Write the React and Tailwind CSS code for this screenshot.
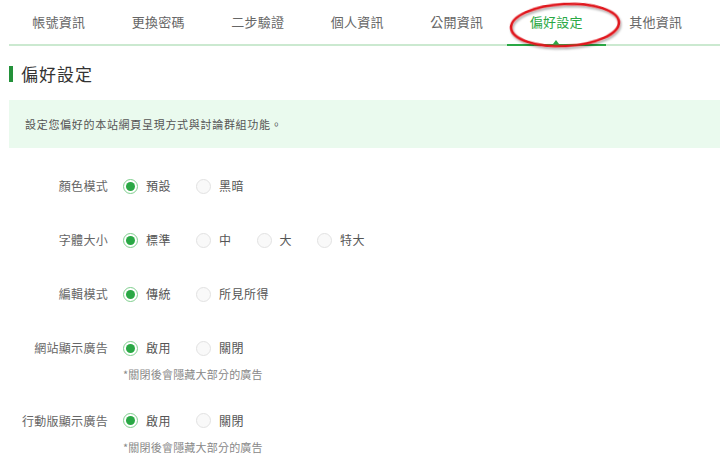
import React, { useState } from 'react';

const tabs = ['帳號資訊', '更換密碼', '二步驗證', '個人資訊', '公開資訊', '偏好設定', '其他資訊'];

const Radio = ({ checked, label, onClick }) => (
    <button type="button" onClick={onClick} className="flex items-center mr-[25px]">
        <span
            className={`w-[15px] h-[15px] rounded-full border flex items-center justify-center ${
                checked ? 'border-[#7fcf8e] bg-white' : 'border-[#e2e2e2] bg-[#f9f9f9]'
            }`}
        >
            {checked && <span className="w-[9px] h-[9px] rounded-full bg-[#2aa845]" />}
        </span>
        <span className="ml-[8px] text-[12px] text-[#555] tracking-[0.5px]">{label}</span>
    </button>
);

const Row = ({ label, options, note }) => {
    const [value, setValue] = useState(0);
    return (
        <div className="flex">
            <div className="w-[100px] text-right text-[12px] text-[#666] tracking-[0.3px] leading-[18px]">{label}</div>
            <div className="ml-[15px]">
                <div className="flex items-center h-[18px]">
                    {options.map((o, i) => (
                        <Radio key={o} label={o} checked={value === i} onClick={() => setValue(i)} />
                    ))}
                </div>
                {note && <div className="mt-[9px] mb-[-7px] text-[11px] text-[#888] tracking-[0.2px]">{note}</div>}
            </div>
        </div>
    );
};

const App = () => {
    return (
        <div className="w-[720px] h-[465px] overflow-hidden bg-white" style={{ fontFamily: '"Noto Sans CJK TC", "Liberation Sans", sans-serif' }}>
            {/* Tabs */}
            <div className="relative ml-[9px] flex h-[46px] border-b-[2px] border-[#cbe9d0]">
                {tabs.map((t) => {
                    const active = t === '偏好設定';
                    return (
                        <div
                            key={t}
                            className={`relative w-[99.5px] flex items-center justify-center text-[13px] tracking-[0.3px] ${
                                active ? 'text-[#2aa845]' : 'text-[#666]'
                            }`}
                        >
                            {t}
                            {active && (
                                <>
                                    <span className="absolute left-0 right-0 bottom-[-2px] h-[2px] bg-[#2aa845]" />
                                    <span className="absolute left-1/2 -translate-x-1/2 bottom-0 w-0 h-0 border-l-[3px] border-r-[3px] border-b-[4px] border-l-transparent border-r-transparent border-b-[#2aa845]" />
                                </>
                            )}
                        </div>
                    );
                })}
                {/* red annotation ellipse */}
                <svg className="absolute left-[494px] top-[0px] pointer-events-none" width="124" height="52" viewBox="0 0 124 52">
                    <defs>
                        <filter id="sh" x="-20%" y="-30%" width="140%" height="160%">
                            <feDropShadow dx="1" dy="2" stdDeviation="1.2" floodColor="#000" floodOpacity="0.35" />
                        </filter>
                    </defs>
                    <ellipse cx="62" cy="25" rx="54" ry="21" fill="none" stroke="#e0141b" strokeWidth="2.6" transform="rotate(-3 62 25)" filter="url(#sh)" />
                </svg>
            </div>

            {/* Heading */}
            <div className="ml-[9px] mt-[20px] flex items-center h-[16px]">
                <span className="w-[4px] h-[16px] bg-[#23913a]" />
                <span className="ml-[8px] text-[17px] text-[#333] tracking-[1px]">偏好設定</span>
            </div>

            {/* Info box */}
            <div className="ml-[9px] mt-[18px] h-[48px] bg-[#eafaee] flex items-center pl-[16px] text-[11px] text-[#555] tracking-[0.7px]">
                設定您偏好的本站網頁呈現方式與討論群組功能。
            </div>

            {/* Settings */}
            <div className="ml-[8px] mt-[29px] flex flex-col gap-[36px]">
                <Row label="顏色模式" options={['預設', '黑暗']} />
                <Row label="字體大小" options={['標準', '中', '大', '特大']} />
                <Row label="編輯模式" options={['傳統', '所見所得']} />
                <Row label="網站顯示廣告" options={['啟用', '關閉']} note="*關閉後會隱藏大部分的廣告" />
                <Row label="行動版顯示廣告" options={['啟用', '關閉']} note="*關閉後會隱藏大部分的廣告" />
            </div>
        </div>
    );
};

export default App;
